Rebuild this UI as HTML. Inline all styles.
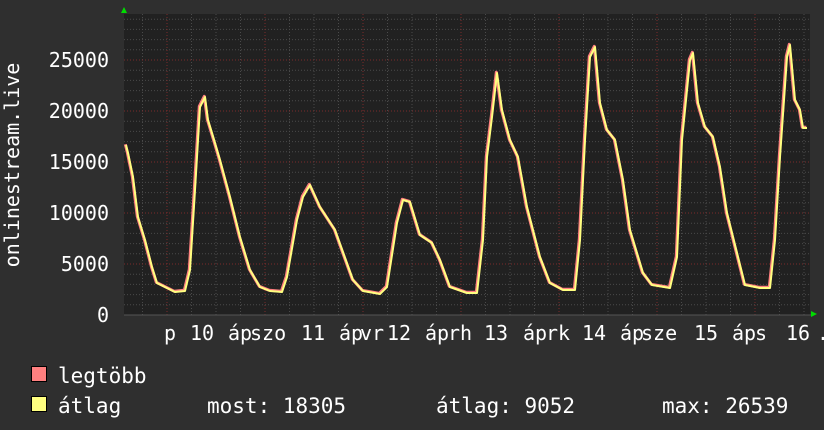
<!DOCTYPE html>
<html><head><meta charset="utf-8"><style>
html,body{margin:0;padding:0;background:#2f2f2f;}
svg{display:block}
text{font-family:"DejaVu Sans Mono","Liberation Mono",monospace;fill:#fff}
</style></head><body>
<svg width="824" height="430" xmlns="http://www.w3.org/2000/svg">
<rect width="824" height="430" fill="#2f2f2f"/>
<rect x="124" y="14" width="686" height="301" fill="#212121"/>
<g stroke="#4a4a4a" stroke-width="1" stroke-dasharray="1,2">
<path d="M124 304.8H810M124 294.6H810M124 284.4H810M124 274.2H810M124 253.8H810M124 243.6H810M124 233.4H810M124 223.2H810M124 202.8H810M124 192.6H810M124 182.4H810M124 172.2H810M124 151.8H810M124 141.6H810M124 131.4H810M124 121.2H810M124 100.8H810M124 90.6H810M124 80.4H810M124 70.2H810M124 49.8H810M124 39.6H810M124 29.4H810M124 19.2H810"/>
<path d="M142.5 14V315M191.5 14V315M216 14V315M240.5 14V315M289.5 14V315M314 14V315M338.5 14V315M387.5 14V315M412 14V315M436.5 14V315M485.5 14V315M510 14V315M534.5 14V315M583.5 14V315M608 14V315M632.5 14V315M681.5 14V315M706 14V315M730.5 14V315M779.5 14V315M804 14V315"/>
</g>
<g stroke="#7a2a2a" stroke-width="1" stroke-dasharray="1,2">
<path d="M124 264H810M124 213H810M124 162H810M124 111H810M124 60H810"/>
<path d="M167 14V315M265 14V315M363 14V315M461 14V315M559 14V315M657 14V315M755 14V315"/>
</g>
<path d="M124 315H812" stroke="#555" stroke-width="1"/>
<polygon points="121,13 127,13 124,7" fill="#00dd00"/>
<polygon points="811,311 811,317 817,314" fill="#00dd00"/>
<g fill="none" stroke-linejoin="round">
<polyline id="c" stroke="#ff8080" stroke-width="3" transform="translate(-0.7,-0.7)" points="126,145 128,153 133,177 138,217 145,240 152,267 157,283 167,288 175,292 185,291 190,270 195,190 200,107 205,97 208,120 215,143 220,160 230,197 240,237 250,270 260,287 270,291 282,292 287,277 297,220 303,197 310,185 320,207 335,230 353,280 363,291 380,294 387,287 397,223 403,200 410,202 420,235 432,243 440,260 450,287 467,293 477,293 483,240 487,157 492,117 497,73 502,110 510,140 518,157 527,207 540,257 550,283 563,290 575,290 580,240 585,140 590,57 595,47 600,103 607,130 615,140 623,180 630,230 643,273 652,285 670,288 677,257 682,140 690,60 693,53 698,103 705,127 713,137 720,167 727,213 737,253 745,285 760,288 770,288 775,240 780,157 787,57 790,45 795,100 800,110 803,128 807,128"/>
<polyline stroke="#ffff80" stroke-width="2" points="126,145 128,153 133,177 138,217 145,240 152,267 157,283 167,288 175,292 185,291 190,270 195,190 200,107 205,97 208,120 215,143 220,160 230,197 240,237 250,270 260,287 270,291 282,292 287,277 297,220 303,197 310,185 320,207 335,230 353,280 363,291 380,294 387,287 397,223 403,200 410,202 420,235 432,243 440,260 450,287 467,293 477,293 483,240 487,157 492,117 497,73 502,110 510,140 518,157 527,207 540,257 550,283 563,290 575,290 580,240 585,140 590,57 595,47 600,103 607,130 615,140 623,180 630,230 643,273 652,285 670,288 677,257 682,140 690,60 693,53 698,103 705,127 713,137 720,167 727,213 737,253 745,285 760,288 770,288 775,240 780,157 787,57 790,45 795,100 800,110 803,128 807,128"/>
</g>
<g font-size="20" text-anchor="end">
<text x="109" y="322">0</text>
<text x="109" y="271">5000</text>
<text x="109" y="220">10000</text>
<text x="109" y="169">15000</text>
<text x="109" y="118">20000</text>
<text x="109" y="67">25000</text>
</g>
<text font-size="20" transform="translate(19,165) rotate(-90)" text-anchor="middle">onlinestream.live</text>
<g font-size="20">
<text x="164" y="340">p</text><text x="190" y="340">10</text><text x="228" y="340">áp</text><text x="250" y="340">szo</text>
<text x="301" y="340">11</text><text x="339" y="340">áp</text><text x="360" y="340">vr</text>
<text x="387" y="340">12</text><text x="425" y="340">áp</text><text x="448" y="340">rh</text>
<text x="484" y="340">13</text><text x="523" y="340">áp</text><text x="546" y="340">rk</text>
<text x="582" y="340">14</text><text x="620" y="340">áp</text><text x="641" y="340">sze</text>
<text x="694" y="340">15</text><text x="732" y="340">áp</text><text x="755" y="340">s</text>
<text x="786" y="340">16</text><text x="817" y="340">.</text>
</g>
<rect x="31.5" y="366.5" width="15" height="15" fill="#ff8080" stroke="#000"/>
<rect x="31.5" y="396.5" width="15" height="15" fill="#ffff80" stroke="#000"/>
<g font-size="21">
<text x="58" y="383">legtöbb</text>
<text x="58" y="413">átlag</text>
<text x="207" y="413">most: 18305</text>
<text x="436" y="413">átlag: 9052</text>
<text x="662" y="413">max: 26539</text>
</g>
</svg>
</body></html>
